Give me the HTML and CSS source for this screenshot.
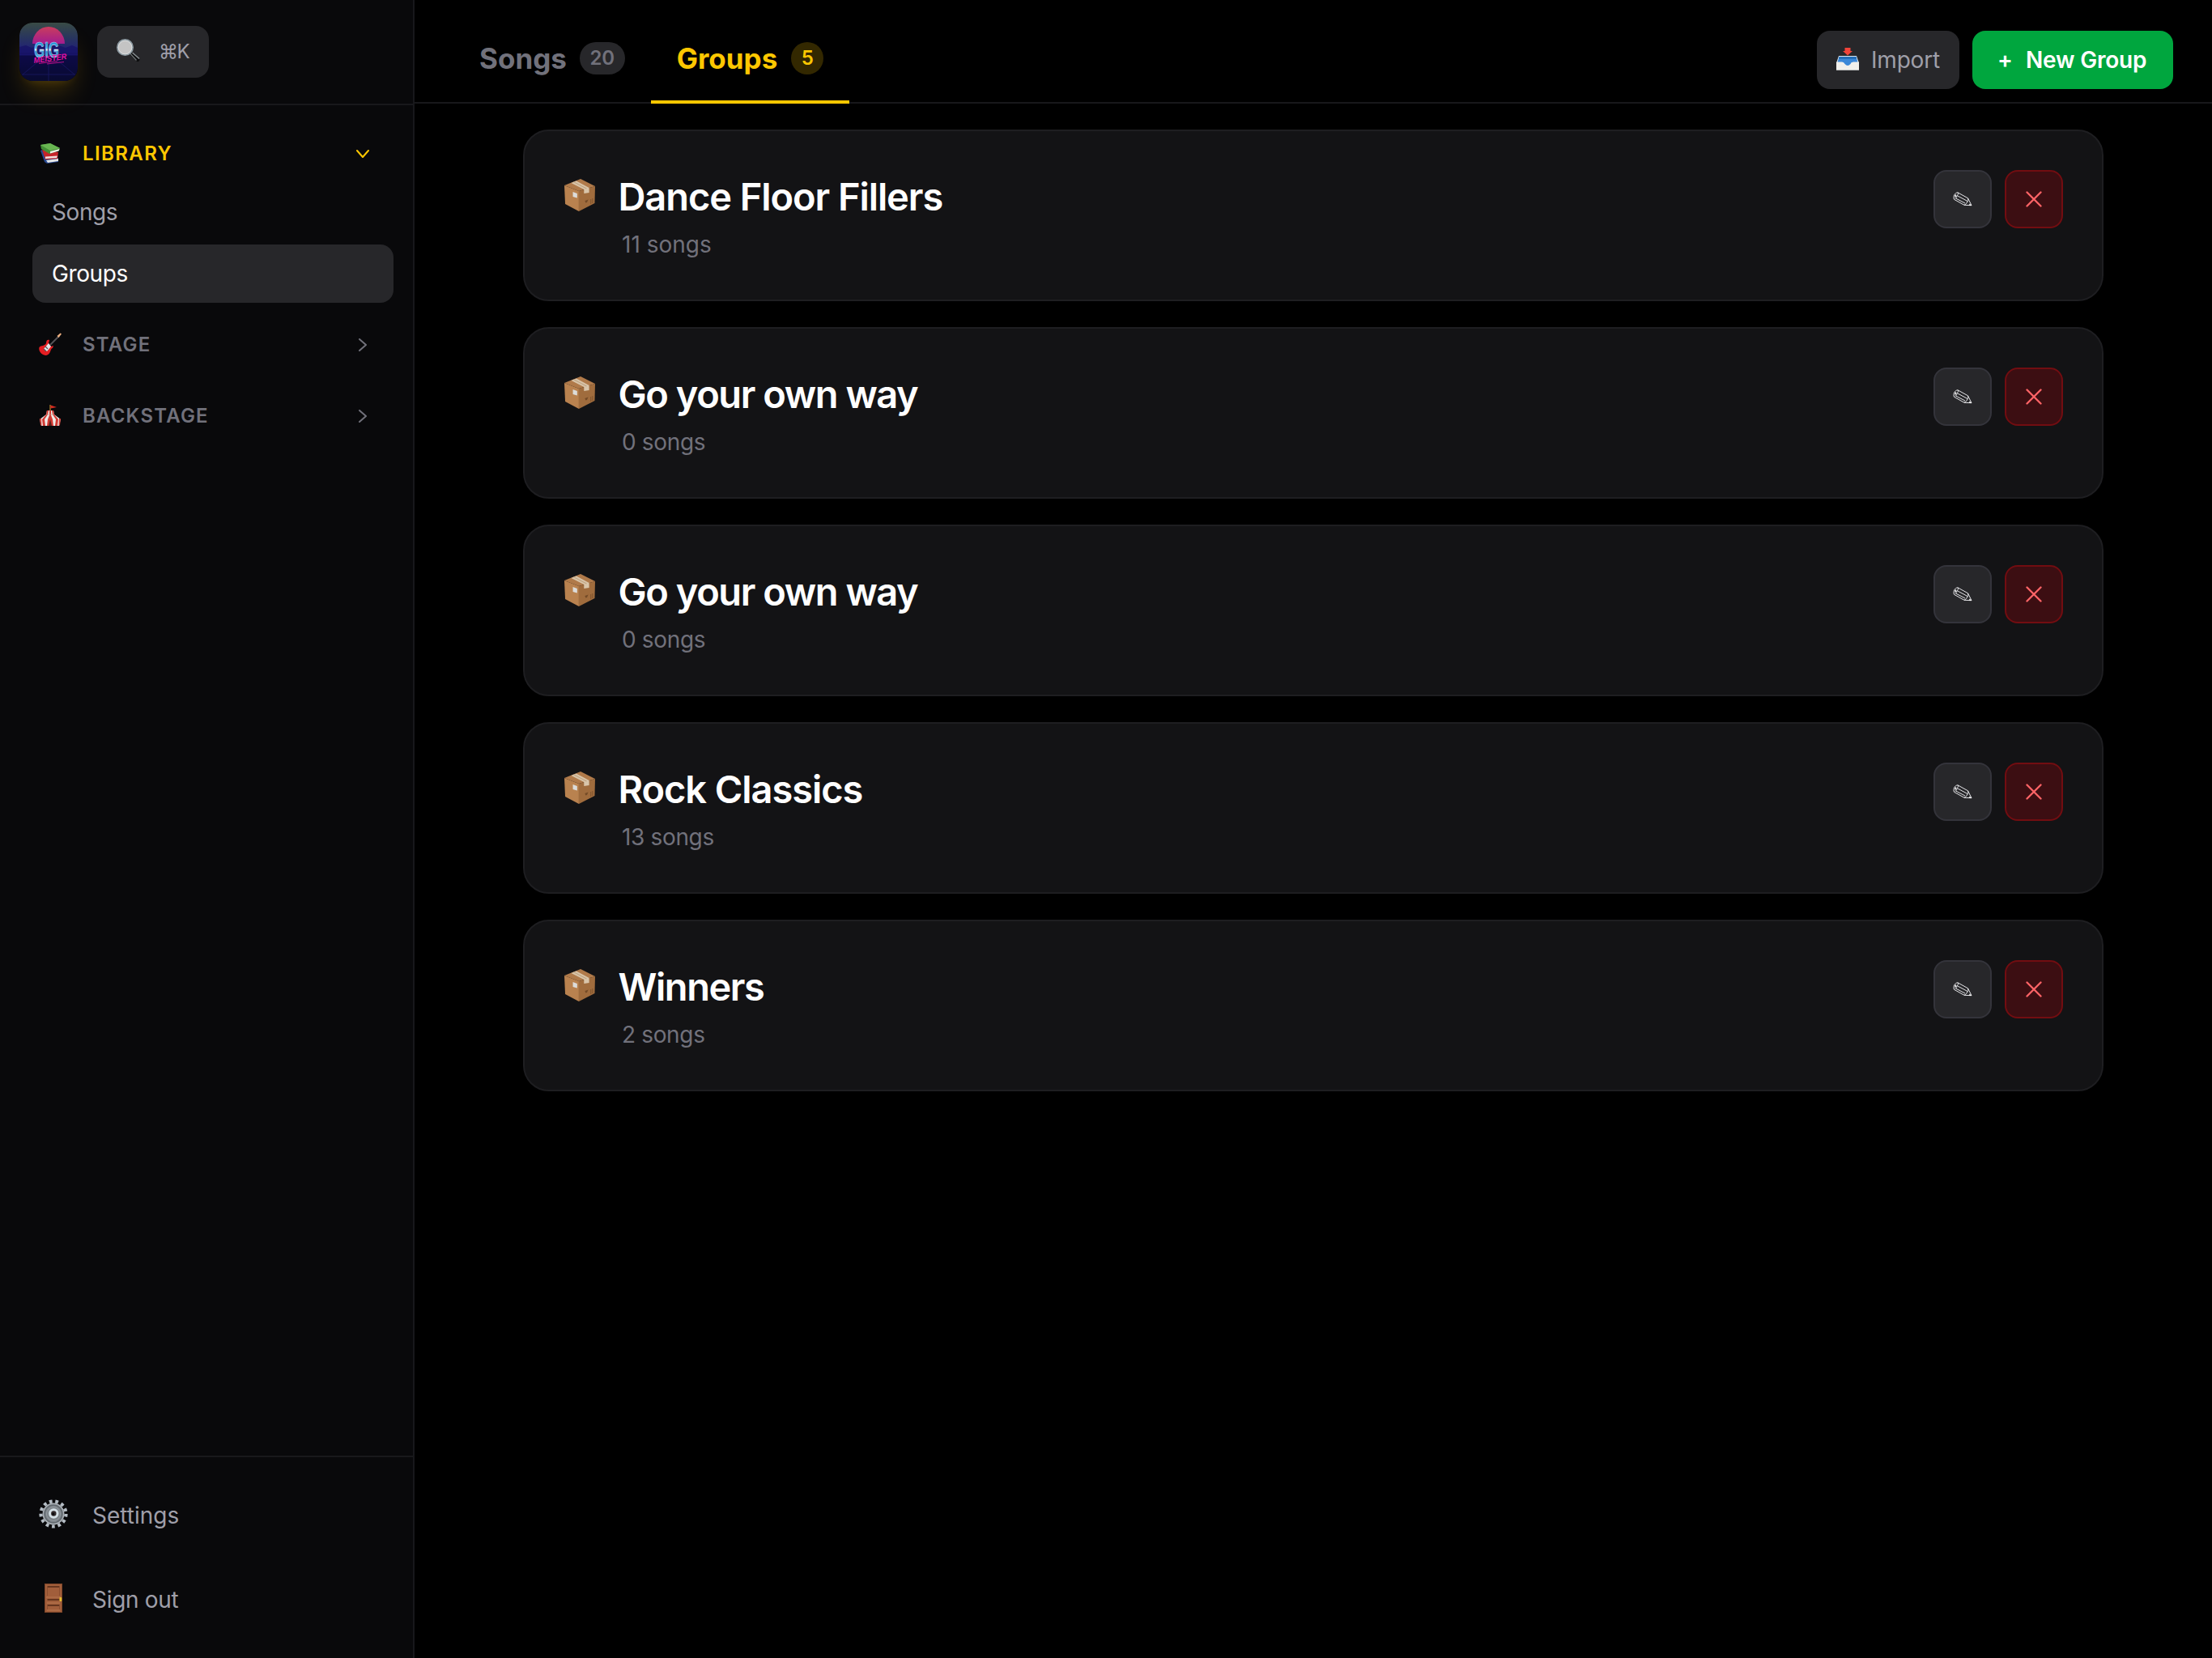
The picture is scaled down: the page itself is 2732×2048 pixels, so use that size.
FILE: index.html
```html
<!DOCTYPE html>
<html lang="en">
<head>
    <meta charset="utf-8">
    <title>Groups</title>
    <link rel="stylesheet" href="styles.css">
</head>
<body>
    <!-- shared icons -->
    <svg class="sprite" width="0" height="0">
        <symbol id="box" viewBox="0 0 36 40" preserveAspectRatio="none">
            <path d="M0 8 L17 15 L17 40 L1 31 Z" fill="#b9824f"/>
            <path d="M17 15 L36 9 L35.500 30 L17 40 Z" fill="#a06c3d"/>
            <path d="M0 8 L19 0 L36 9 L17 15 Z" fill="#b07a4a"/>
            <path d="M8 5 L14 2.500 L29 11 L29 17 L23 18 L23 13 Z" fill="#d9c5aa"/>
            <path d="M11 3.800 L26 12" stroke="#bfa482" stroke-width="1"/>
            <path d="M10 16 L15 18 L15 23.500 L10 22 Z" fill="#dcdcda"/>
            <path d="M24 27 L28 25.500 L26.500 29 L25 29.500 Z" fill="#744b27"/>
            <path d="M31 25 L31 31 M33 24 L33 30" stroke="#80542e" stroke-width="1"/>
        </symbol>
        <symbol id="pencil" viewBox="0 0 24 18">
            <g fill="none" stroke="#e4e4e7" stroke-width="1" stroke-linejoin="round">
                <path d="M6 .8 L18.500 7.800 L23 16.700 L14 16.300 L1.500 9.300 C0 6 2 1 6 .8 Z"/>
                <path d="M5 4.500 L18 11.500 M3.500 8 L15 14 M18.500 7.800 Q19.500 11 18 12 Q17 15 14 16.300 M6 .8 Q8 3 5 4.500 Q5 7 3 8.500"/>
            </g>
            <path d="M20.500 14.500 L23.300 17 L20 16.700 Z M2.500 4 L4 3 L4 6 L2.500 7 Z" fill="#fff"/>
        </symbol>
        <symbol id="cross" viewBox="0 0 20 20">
            <path d="M1.500 1.500 L18.500 18.500 M18.500 1.500 L1.500 18.500" stroke="#ff6467" stroke-width="2.300" stroke-linecap="round"/>
        </symbol>
        <symbol id="chevron" viewBox="0 0 10 16">
            <path d="M1 1 L9 8 L1 15" fill="none" stroke="currentColor" stroke-width="2" stroke-linecap="round" stroke-linejoin="round"/>
        </symbol>
    </svg>

    <div class="app">
        <aside class="sidebar">
            <div class="brand">
                <svg class="logo" viewBox="0 0 72 72">
                    <defs>
                        <linearGradient id="sky" x1="0" y1="0" x2="0" y2="1">
                            <stop offset="0" stop-color="#394b45"/>
                            <stop offset=".25" stop-color="#29365d"/>
                            <stop offset=".5" stop-color="#201d79"/>
                            <stop offset=".56" stop-color="#0d0b48"/>
                            <stop offset="1" stop-color="#090b31"/>
                        </linearGradient>
                        <linearGradient id="sun" x1="0" y1="0" x2="0" y2="1">
                            <stop offset="0" stop-color="#c93d5d"/>
                            <stop offset="1" stop-color="#a31c8f"/>
                        </linearGradient>
                        <linearGradient id="chrome" x1="0" y1="0" x2="0" y2="1">
                            <stop offset="0" stop-color="#1670bd"/>
                            <stop offset=".42" stop-color="#35b5ec"/>
                            <stop offset=".5" stop-color="#e6fbff"/>
                            <stop offset=".58" stop-color="#168ed0"/>
                            <stop offset="1" stop-color="#7ce4f5"/>
                        </linearGradient>
                    </defs>
                    <rect width="72" height="72" rx="16" fill="url(#sky)"/>
                    <path d="M16 26 A20 21 0 0 1 56 26 Z" fill="url(#sun)"/>
                    <path d="M0 30 L8 28 L15 31 L24 28 L48 28 L57 31 L65 28 L72 31 L72 40 L0 40 Z" fill="#171366" opacity=".8"/>
                    <path d="M0 40 H72 M36 40 V72 M28 44 L4 64 M44 44 L68 64 M3 64 H69" stroke="#2b299b" stroke-width=".7" opacity=".5"/>
                    <text class="logo-gig" x="18" y="42.500" textLength="31" lengthAdjust="spacingAndGlyphs">GIG</text>
                    <text class="logo-meister" x="18" y="50" transform="rotate(-7 18 50)" textLength="41" lengthAdjust="spacingAndGlyphs">MEISTER</text>
                    <path d="M24 50.500 L47 47.500 M34 51 L55 48.500" stroke="#c4108f" stroke-width=".9"/>
                </svg>
                <button class="search" type="button">
                    <svg class="lens" viewBox="0 0 30 30">
                        <path d="M18 18 L26 25.500" stroke="#0c0d0e" stroke-width="5" stroke-linecap="round"/>
                        <path d="M17 18.500 L24.500 26.500" stroke="#6b7072" stroke-width="1.300"/>
                        <path d="M19.500 17 L28 24.500" stroke="#8a9194" stroke-width="1.500"/>
                        <circle cx="10.500" cy="10.500" r="9.600" fill="#c4c4c4" stroke="#8d9aa1" stroke-width="1.800"/>
                        <circle cx="10.500" cy="10.500" r="8.300" fill="none" stroke="#e2e5e6" stroke-width=".8"/>
                    </svg>
                    <span class="key">⌘K</span>
                </button>
            </div>

            <nav class="nav">
                <div class="section open">
                    <svg class="emoji" viewBox="0 0 28 28">
                        <path d="M2 11 L4 10 L9 22 L24 20 L24 25 L10 27 L7 25 Z" fill="#26468f"/>
                        <path d="M9 23 L24 21 L24 24 L11 26 Z" fill="#e5e5e5"/>
                        <path d="M4 10 L24 13 L23 21 L8 22 Z" fill="#c5252a"/>
                        <path d="M8 18.500 L23 17.500 L22 20 L8 21 Z" fill="#efdfdf"/>
                        <path d="M2 4 L14 2 L26 8 L25 11 L13 15 L3 9 Z" fill="#438f36"/>
                        <path d="M2 4 L14 2 L26 8 L14 11 Z" fill="#69b652"/>
                        <path d="M14 12 L25.500 9 L24.500 11.500 L14 14.500 Z" fill="#eef1e9"/>
                    </svg>
                    <span class="label library">LIBRARY</span>
                    <svg class="chevron down"><use href="#chevron"/></svg>
                </div>
                <a class="item">Songs</a>
                <a class="item active">Groups</a>
                <div class="section">
                    <svg class="emoji" viewBox="0 0 28 28">
                        <path d="M14 15 L25 4" stroke="#575558" stroke-width="1.800"/>
                        <path d="M22.500 4 L26.500 .5 L28 1.500 L24.500 6 Z" fill="#efb181"/>
                        <path d="M9 13 C9 9 11 8 13 9 L12 13 L15 17 L18 16 L17 19 C14 19 15 27 9 28 C4 28 -1 23 .5 18 C3 15 7 17 9 13 Z" fill="#e51e22"/>
                        <path d="M12 13 L15 17 L10 23 L6 20 Z" fill="#e3e5e8"/>
                        <path d="M8 17 L11 20 M6 20 L9 23" stroke="#555" stroke-width="1.300"/>
                    </svg>
                    <span class="label">STAGE</span>
                    <svg class="chevron"><use href="#chevron"/></svg>
                </div>
                <div class="section">
                    <svg class="emoji" viewBox="0 0 28 28">
                        <path d="M14 1 V8" stroke="#a17829" stroke-width="1.400"/>
                        <path d="M14.500 1.500 L22 4 L14.500 5.500 Z" fill="#d52b20"/>
                        <path d="M10 8 H18 L19 13 L27 19 L25 27 H3 L1 19 L9 13 Z" fill="#eee9e7"/>
                        <path d="M10 8 H12 L11 13 L7 19 L8 27 H5 L4 19 L9 13 Z M16 8 H18 L19 13 L24 19 L23 27 H20 L21 19 L17 13 Z M13 8 H15 V14 L17 19 L18 27 H10 L11 19 L13 14 Z M1 18 L3 18 L3.500 27 L2 26 Z M25 18 H27 L26 26 L24.500 27 Z" fill="#d23932"/>
                        <path d="M14 19 L16 27 H12 Z" fill="#5b211c"/>
                        <path d="M9 13 H19" stroke="#c98f82" stroke-width=".8"/>
                    </svg>
                    <span class="label">BACKSTAGE</span>
                    <svg class="chevron"><use href="#chevron"/></svg>
                </div>
            </nav>

            <div class="foot">
                <a class="foot-item">
                    <svg class="foot-icon" viewBox="0 0 36 36">
                        <circle cx="18" cy="18" r="15.500" fill="none" stroke="#b4bcc4" stroke-width="4.200" stroke-dasharray="3.700 3.791"/>
                        <circle cx="18" cy="18" r="13.500" fill="#a9afb5"/>
                        <circle cx="18" cy="18" r="11" fill="#7c8389" stroke="#60676d" stroke-width="1.500"/>
                        <circle cx="18" cy="18" r="8.500" fill="none" stroke="#949ba1" stroke-width="1"/>
                        <circle cx="18.300" cy="17.500" r="4.700" fill="#30292b" stroke="#d3dfe5" stroke-width="3"/>
                        <circle cx="17.700" cy="18" r="1.500" fill="#0b0b0d"/>
                    </svg>
                    <span>Settings</span>
                </a>
                <a class="foot-item signout">
                    <svg class="foot-icon" viewBox="0 0 36 36">
                        <rect x="7" y="0" width="22" height="36" fill="#7d4529"/>
                        <rect x="8" y="1" width="20" height="34" fill="#a15e3b"/>
                        <path d="M10.500 4 H25.500 M10.500 20 H25.500 M10.500 27 H25.500" stroke="#66361f" stroke-width="2"/>
                        <path d="M10.500 5 V15 M25.500 5 V15 M10.500 27 V32 M25.500 27 V32" stroke="#8b4e30" stroke-width="1"/>
                        <path d="M9 17 H27 M10 24 H26 M10 33 H26" stroke="#b77750" stroke-width="1"/>
                        <rect x="25.500" y="17" width="2.700" height="5" rx=".7" fill="#e6bd2e"/>
                    </svg>
                    <span>Sign out</span>
                </a>
            </div>
        </aside>

        <main class="main">
            <header class="topbar">
                <div class="tabs">
                    <div class="tab">Songs<span class="badge">20</span></div>
                    <div class="tab active">Groups<span class="badge">5</span></div>
                </div>
                <div class="actions">
                    <button class="import" type="button">
                        <svg class="tray" viewBox="0 0 28 28">
                            <path d="M10.500 0 H17.500 V4 H20 L14 9.500 L8 4 H10.500 Z" fill="#f0443a"/>
                            <path d="M3 10 H25 L28 19 V27.500 H0 V19 Z" fill="#dce6ec"/>
                            <path d="M3.500 11 H24.500 L26.500 18 L17 22 H11 L1.500 18 Z" fill="#3b88d8"/>
                            <path d="M3.500 11 H24.500 L25 14 H3 Z" fill="#236eb8"/>
                            <path d="M0 17.500 H7 Q9.500 17.500 10.500 20 Q14 24 17.500 20 Q18.500 17.500 21 17.500 H28 V27.500 H0 Z" fill="#f1f0ec"/>
                        </svg>
                        <span class="import-text">Import</span>
                    </button>
                    <button class="new" type="button"><span class="plus">+</span>New Group</button>
                </div>
            </header>

            <div class="list">
                <div class="card">
                    <svg class="box"><use href="#box"/></svg>
                    <div class="info">
                        <h2>Dance Floor Fillers</h2>
                        <p class="loose">11 songs</p>
                    </div>
                    <button class="edit" type="button"><svg><use href="#pencil"/></svg></button>
                    <button class="delete" type="button"><svg><use href="#cross"/></svg></button>
                </div>
                <div class="card">
                    <svg class="box"><use href="#box"/></svg>
                    <div class="info">
                        <h2 class="tight">Go your own way</h2>
                        <p>0 songs</p>
                    </div>
                    <button class="edit" type="button"><svg><use href="#pencil"/></svg></button>
                    <button class="delete" type="button"><svg><use href="#cross"/></svg></button>
                </div>
                <div class="card">
                    <svg class="box"><use href="#box"/></svg>
                    <div class="info">
                        <h2 class="tight">Go your own way</h2>
                        <p>0 songs</p>
                    </div>
                    <button class="edit" type="button"><svg><use href="#pencil"/></svg></button>
                    <button class="delete" type="button"><svg><use href="#cross"/></svg></button>
                </div>
                <div class="card">
                    <svg class="box"><use href="#box"/></svg>
                    <div class="info">
                        <h2>Rock Classics</h2>
                        <p>13 songs</p>
                    </div>
                    <button class="edit" type="button"><svg><use href="#pencil"/></svg></button>
                    <button class="delete" type="button"><svg><use href="#cross"/></svg></button>
                </div>
                <div class="card">
                    <svg class="box"><use href="#box"/></svg>
                    <div class="info">
                        <h2 class="tight">Winners</h2>
                        <p>2 songs</p>
                    </div>
                    <button class="edit" type="button"><svg><use href="#pencil"/></svg></button>
                    <button class="delete" type="button"><svg><use href="#cross"/></svg></button>
                </div>
            </div>
        </main>
    </div>
</body>
</html>
```
FILE: styles.css
```css
* {box-sizing: border-box;}
body {margin: 0; background: #000; color: #fff; font-family: Inter, "Liberation Sans", sans-serif; font-size: 28px; line-height: 40px;}
button {border: none; padding: 0; font: inherit; display: flex; align-items: center;}
svg {display: block; flex: none;}
h2, p {margin: 0;}
.sprite {position: absolute;}
.app {display: flex; height: 2048px;}

/* sidebar */
.sidebar {width: 512px; flex: none; display: flex; flex-direction: column; background: #09090b; border-right: 2px solid #18181b;}
.brand {height: 130px; padding: 28px 24px 0; display: flex; align-items: flex-start; gap: 24px; border-bottom: 2px solid #18181b;}
.logo {width: 72px; height: 72px; border-radius: 16px; box-shadow: 0 20px 30px -6px rgba(240, 177, 0, .2), 0 8px 12px -8px rgba(240, 177, 0, .2);}
.logo-gig {font: 700 27px "Liberation Sans", sans-serif; fill: url(#chrome); stroke: #cfc8e8; stroke-width: .6px;}
.logo-meister {font: italic 700 10px "Liberation Sans", sans-serif; fill: #e411a5;}
.search {width: 138px; height: 64px; margin-top: 4px; padding-left: 24px; border-radius: 16px; background: #27272a; color: #9f9fa9;}
.lens {width: 30px; height: 30px; margin-bottom: 2px;}
.key {margin-left: 22px; font-size: 24px; letter-spacing: -1.500px;}

.nav {flex: 1; padding: 24px 24px 0 40px; display: flex; flex-direction: column;}
.section {height: 72px; margin-top: 16px; padding: 0 30px 0 8px; display: flex; align-items: center; color: #71717b;}
.section.open {margin: 0; color: #fdc700;}
.emoji {width: 28px; height: 28px; margin-bottom: 2px;}
.label {flex: 1; margin-left: 26px; font-size: 24px; font-weight: 600; letter-spacing: 1.200px;}
.label.library {letter-spacing: 1.400px;}
.chevron {width: 10px; height: 16px; margin-right: 3px;}
.chevron.down {transform: rotate(90deg);}
.item {height: 72px; margin-bottom: 4px; padding: 0 0 0 24px; display: flex; align-items: center; border-radius: 16px; color: #9f9fa9; letter-spacing: -.4px;}
.item.active {margin-bottom: 0; background: #27272a; color: #fff;}

.foot {height: 250px; padding: 24px; border-top: 2px solid #18181b; display: flex; flex-direction: column; gap: 8px;}
.foot-item {height: 96px; padding-left: 24px; display: flex; align-items: center; gap: 30px; color: #9f9fa9;}
.foot-item.signout {letter-spacing: -.3px;}
.foot-icon {width: 36px; height: 36px; margin-bottom: 4px;}

/* top bar */
.main {flex: 1;}
.topbar {height: 128px; padding: 0 48px; display: flex; justify-content: space-between; border-bottom: 2px solid #18181b;}
.tabs {display: flex; height: 128px;}
.tab {padding: 19px 32px 0; display: flex; align-items: center; gap: 16px; border-bottom: 4px solid transparent; font-size: 35px; font-weight: 700; color: #71717b;}
.tab.active {gap: 17px; color: #fdc700; border-color: #fdc700;}
.badge {height: 40px; min-width: 40px; padding: 0 12.500px; border-radius: 20px; background: #27272a; font-size: 24px; font-weight: 600; text-align: center;}
.tab.active .badge {background: #332800;}
.actions {padding-top: 38px; display: flex; gap: 16px;}
.import {width: 176px; height: 72px; padding-left: 24px; border-radius: 16px; background: #27272a; color: #9f9fa9;}
.tray {width: 28px; height: 28px; margin-bottom: 2px;}
.import-text {margin-left: 15px; letter-spacing: -.2px;}
.new {width: 248px; height: 72px; padding-left: 31px; border-radius: 16px; background: #00a63e; color: #fff; font-weight: 600; letter-spacing: -.2px;}
.plus {width: 35px; text-align: left;}

/* group cards */
.list {padding: 32px 134px; display: flex; flex-direction: column; gap: 32px;}
.card {height: 212px; padding: 48px; display: flex; align-items: flex-start; border: 2px solid #1e1e21; border-radius: 32px; background: #131315;}
.box {width: 38px; height: 40px; margin: 11px 0 0 1px;}
.info {flex: 1; padding-left: 28.500px;}
.info h2 {height: 66px; font-size: 47px; font-weight: 600; line-height: 66px; letter-spacing: -1.080px;}
.info h2.tight {letter-spacing: -1.450px;}
.info p {padding: 6px 0 0 4.500px; color: #71717b; letter-spacing: -.35px;}
.info p.loose {letter-spacing: 0;}
.edit, .delete {width: 72px; height: 72px; justify-content: center; border-radius: 16px;}
.edit {background: #27272a; border: 2px solid #34343b;}
.edit svg {width: 24px; height: 18px;}
.delete {margin-left: 16px; background: #3c0e12; border: 2px solid #720d11;}
.delete svg {width: 20px; height: 20px;}
```
